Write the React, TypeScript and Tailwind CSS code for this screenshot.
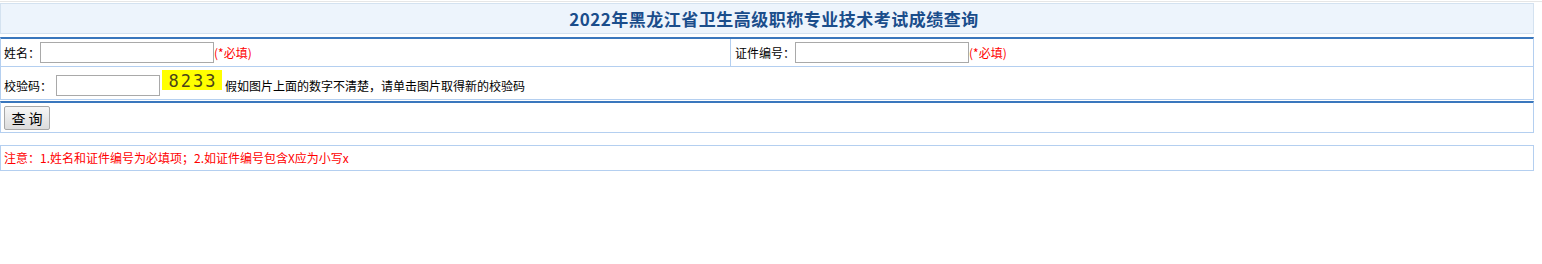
export default function App() {
  const font = { fontFamily: '"Noto Sans CJK SC", "Microsoft YaHei", sans-serif' };

  return (
    <div className="w-[1542px] h-[264px] bg-white text-[12px] leading-[16px] text-black" style={font}>
      <div className="h-px bg-[#e6e6e6] mt-px" />
      <div className="w-[1534px] mt-px">
        {/* title */}
        <div className="h-[31px] border border-[#d4e2f0] bg-[#edf4fc] flex items-center justify-center">
          <h1 className="text-[17px] leading-[20px] font-bold tracking-[0.5px] text-[#1a4d8b] pl-[14px]">
            2022年黑龙江省卫生高级职称专业技术考试成绩查询
          </h1>
        </div>

        {/* form */}
        <div className="mt-[3px] border-t-2 border-t-[#3a77bd] border-x border-x-[#b4cff0] border-b border-b-[#b4cff0]">
          <div className="flex h-[28px] border-b border-[#b4cff0]">
            <div className="w-[730px] border-r border-[#b4cff0] flex items-center pl-[3px]">
              <span>姓名：</span>
              <input className="w-[174px] h-[21px] border border-[#a9a9a9] outline-none" />
              <span className="text-[#ff0000]">(*必填)</span>
            </div>
            <div className="flex-1 flex items-center pl-[4px]">
              <span>证件编号：</span>
              <input className="w-[174px] h-[21px] border border-[#a9a9a9] outline-none" />
              <span className="text-[#ff0000]">(*必填)</span>
            </div>
          </div>
          <div className="flex items-start h-[32px] pl-[3px]">
            <span className="mt-[11px]">校验码：</span>
            <input className="mt-[8px] ml-[4px] w-[104px] h-[21px] border border-[#a9a9a9] outline-none" />
            <div
              className="mt-[3px] ml-[2px] w-[60px] h-[20px] bg-[#ffff00] flex items-center justify-center text-[17px] leading-[20px] tracking-[2px] text-[#4a4418] pl-[2px] pt-[2px]"
              style={{ fontFamily: '"DejaVu Sans Mono", monospace' }}
            >
              8233
            </div>
            <span className="mt-[11px] ml-[3px]">假如图片上面的数字不清楚，请单击图片取得新的校验码</span>
          </div>
        </div>

        <div className="mt-px border-t-2 border-t-[#3a77bd] border-x border-x-[#b4cff0] border-b border-b-[#b4cff0] h-[32px] flex items-center pl-[3px]">
          <button className="w-[46px] h-[24px] border border-[#a8a8a8] rounded-[2px] bg-gradient-to-b from-[#f7f7f7] to-[#dcdcdc] text-[14px] leading-[18px]">
            查 询
          </button>
        </div>

        <div className="mt-[12px] h-[26px] border border-[#b4cff0] flex items-center pl-[3px] text-[#ff0000]">
          注意：1.姓名和证件编号为必填项；2.如证件编号包含X应为小写x
        </div>
      </div>
    </div>
  );
}
